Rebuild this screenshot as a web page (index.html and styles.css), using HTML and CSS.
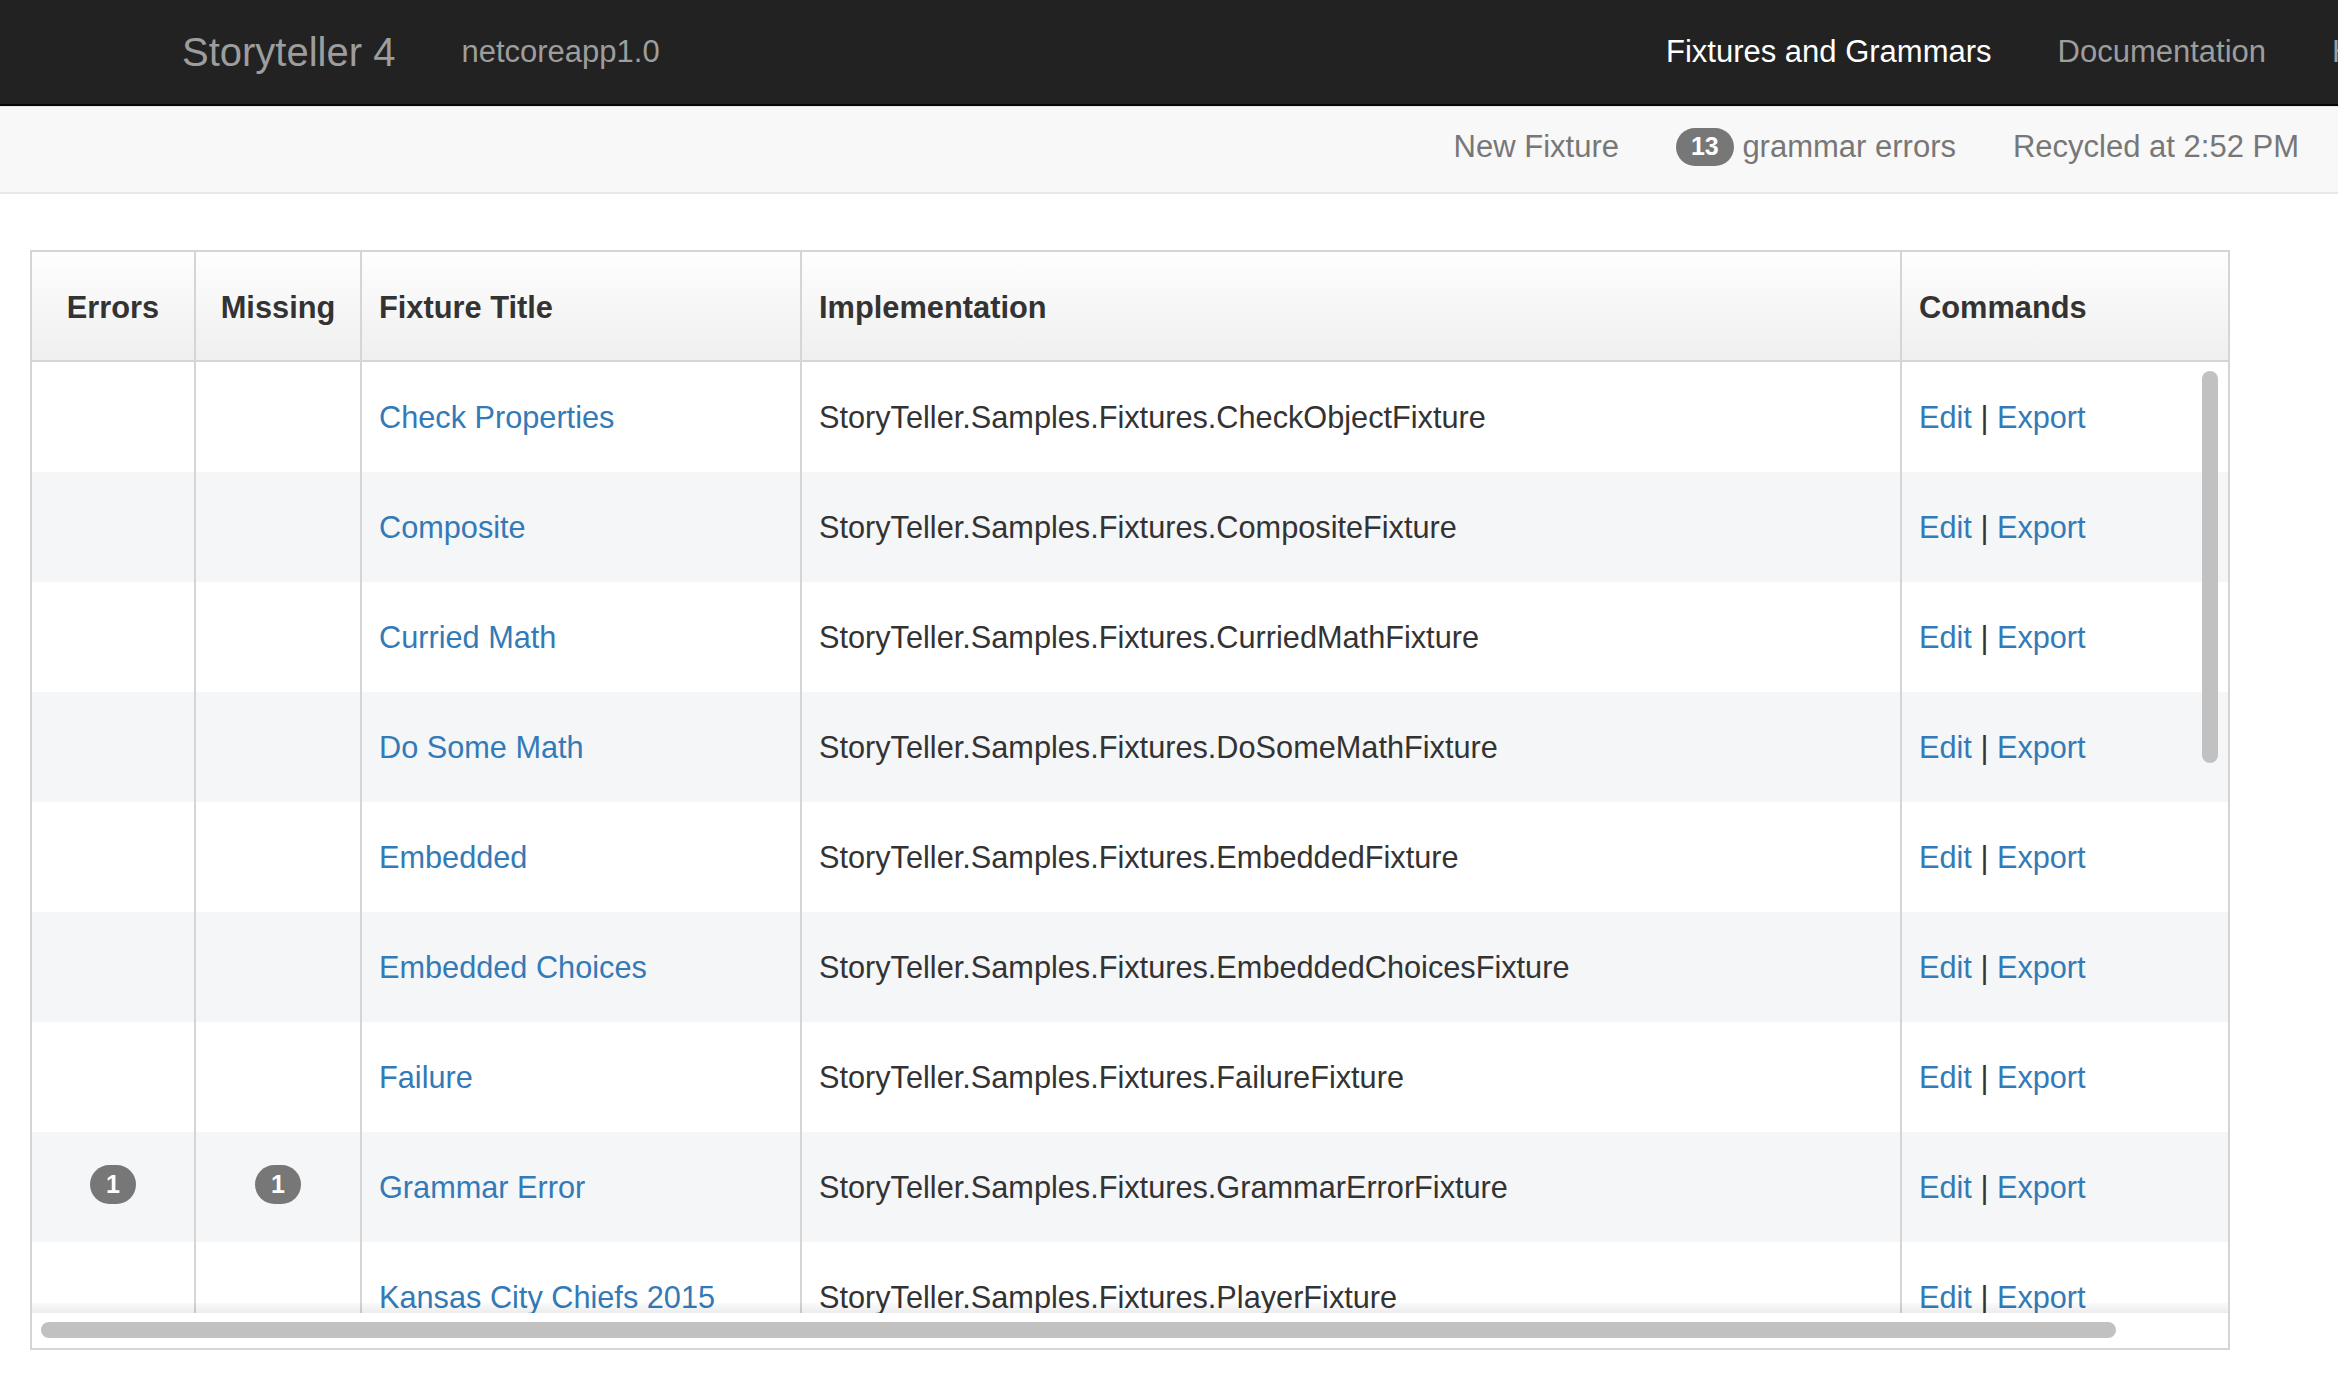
FILE: index.html
```html
<!DOCTYPE html>
<html lang="en">
<head>
<meta charset="utf-8">
<title>Storyteller 4 - Fixtures and Grammars</title>
<link rel="stylesheet" href="styles.css">
</head>
<body>
<header class="topbar">
  <div class="topbar-inner">
    <a class="brand" href="#">Storyteller 4</a>
    <span class="framework">netcoreapp1.0</span>
    <ul class="nav">
      <li class="active"><a href="#">Fixtures and Grammars</a></li>
      <li><a href="#">Documentation</a></li>
      <li><a href="#">Help</a></li>
    </ul>
  </div>
</header>
<div class="subbar">
  <a class="sub-item" href="#">New Fixture</a>
  <span class="sub-item"><span class="badge">13</span> grammar errors</span>
  <span class="sub-item">Recycled at 2:52 PM</span>
</div>
<main class="content">
  <div class="grid">
    <div class="row head">
      <div class="cell center">Errors</div>
      <div class="cell center">Missing</div>
      <div class="cell">Fixture Title</div>
      <div class="cell">Implementation</div>
      <div class="cell">Commands</div>
    </div>
    <div class="grid-body">
      <div class="row">
        <div class="cell center"></div><div class="cell center"></div>
        <div class="cell"><a href="#">Check Properties</a></div>
        <div class="cell">StoryTeller.Samples.Fixtures.CheckObjectFixture</div>
        <div class="cell"><a href="#">Edit</a>&nbsp;|&nbsp;<a href="#">Export</a></div>
      </div>
      <div class="row">
        <div class="cell center"></div><div class="cell center"></div>
        <div class="cell"><a href="#">Composite</a></div>
        <div class="cell">StoryTeller.Samples.Fixtures.CompositeFixture</div>
        <div class="cell"><a href="#">Edit</a>&nbsp;|&nbsp;<a href="#">Export</a></div>
      </div>
      <div class="row">
        <div class="cell center"></div><div class="cell center"></div>
        <div class="cell"><a href="#">Curried Math</a></div>
        <div class="cell">StoryTeller.Samples.Fixtures.CurriedMathFixture</div>
        <div class="cell"><a href="#">Edit</a>&nbsp;|&nbsp;<a href="#">Export</a></div>
      </div>
      <div class="row">
        <div class="cell center"></div><div class="cell center"></div>
        <div class="cell"><a href="#">Do Some Math</a></div>
        <div class="cell">StoryTeller.Samples.Fixtures.DoSomeMathFixture</div>
        <div class="cell"><a href="#">Edit</a>&nbsp;|&nbsp;<a href="#">Export</a></div>
      </div>
      <div class="row">
        <div class="cell center"></div><div class="cell center"></div>
        <div class="cell"><a href="#">Embedded</a></div>
        <div class="cell">StoryTeller.Samples.Fixtures.EmbeddedFixture</div>
        <div class="cell"><a href="#">Edit</a>&nbsp;|&nbsp;<a href="#">Export</a></div>
      </div>
      <div class="row">
        <div class="cell center"></div><div class="cell center"></div>
        <div class="cell"><a href="#">Embedded Choices</a></div>
        <div class="cell">StoryTeller.Samples.Fixtures.EmbeddedChoicesFixture</div>
        <div class="cell"><a href="#">Edit</a>&nbsp;|&nbsp;<a href="#">Export</a></div>
      </div>
      <div class="row">
        <div class="cell center"></div><div class="cell center"></div>
        <div class="cell"><a href="#">Failure</a></div>
        <div class="cell">StoryTeller.Samples.Fixtures.FailureFixture</div>
        <div class="cell"><a href="#">Edit</a>&nbsp;|&nbsp;<a href="#">Export</a></div>
      </div>
      <div class="row">
        <div class="cell center"><span class="badge count">1</span></div>
        <div class="cell center"><span class="badge count">1</span></div>
        <div class="cell"><a href="#">Grammar Error</a></div>
        <div class="cell">StoryTeller.Samples.Fixtures.GrammarErrorFixture</div>
        <div class="cell"><a href="#">Edit</a>&nbsp;|&nbsp;<a href="#">Export</a></div>
      </div>
      <div class="row">
        <div class="cell center"></div><div class="cell center"></div>
        <div class="cell"><a href="#">Kansas City Chiefs 2015</a></div>
        <div class="cell">StoryTeller.Samples.Fixtures.PlayerFixture</div>
        <div class="cell"><a href="#">Edit</a>&nbsp;|&nbsp;<a href="#">Export</a></div>
      </div>
      <div class="vthumb"></div>
    </div>
    <div class="hscroll"><div class="hthumb"></div></div>
  </div>
</main>
</body>
</html>
```

FILE: styles.css
```css
html, body {
  margin: 0;
  padding: 0;
  background: #fff;
  overflow: hidden;
}
body {
  font-family: "Liberation Sans", Arial, Helvetica, sans-serif;
  font-size: 31px;
  color: #333;
}
a {
  color: #337ab7;
  text-decoration: none;
}

/* top navbar */
.topbar {
  background: #222;
  border-bottom: 2px solid #080808;
  height: 104px;
  overflow: hidden;
}
.topbar-inner {
  display: flex;
  align-items: center;
  height: 104px;
  padding-left: 182px;
}
.brand {
  font-size: 40px;
  color: #9d9d9d;
  margin-right: 66px;
}
.framework {
  color: #9d9d9d;
  white-space: nowrap;
}
.nav {
  display: flex;
  list-style: none;
  margin: 0 0 0 auto;
  padding: 0;
  width: 705px;
  overflow: hidden;
  white-space: nowrap;
}
.nav li {
  flex-shrink: 0;
  padding: 0 33px;
}
.nav a {
  color: #9d9d9d;
}
.nav li.active a {
  color: #fff;
}

/* secondary bar */
.subbar {
  display: flex;
  justify-content: flex-end;
  align-items: center;
  gap: 57px;
  height: 88px;
  box-sizing: border-box;
  padding: 0 39px 6px 0;
  background: #f8f8f8;
  border-top: 1px solid #e7e7e7;
  border-bottom: 2px solid #e7e7e7;
  color: #777;
}
.sub-item {
  color: #777;
  white-space: nowrap;
}

.badge {
  display: inline-block;
  background: #777;
  color: #fff;
  font-weight: bold;
  font-size: 25px;
  line-height: 1;
  padding: 6px 15px 7px;
  border-radius: 20px;
  vertical-align: 2px;
}
.badge.count {
  padding: 7px 16px 7px;
  margin-bottom: 6px;
  vertical-align: baseline;
}

/* grid */
.content {
  padding: 56px 30px;
}
.grid {
  width: 2200px;
  box-sizing: border-box;
  border: 2px solid #d5d5d5;
}
.row {
  display: grid;
  grid-template-columns: 164px 166px 440px 1100px 1fr;
  height: 110px;
  font-size: 30.7px;
}
.row.head {
  height: 110px;
  border-bottom: 2px solid #d5d5d5;
  box-sizing: border-box;
  background: linear-gradient(#fefefe, #efefef);
  font-weight: bold;
  font-size: 30.8px;
}
.cell {
  display: flex;
  align-items: center;
  padding: 1px 17px 0;
  border-right: 2px solid #d5d5d5;
  white-space: nowrap;
  overflow: hidden;
}
.row.head .cell {
  padding-top: 3px;
}
.cell:last-child {
  border-right: none;
}
.cell.center {
  justify-content: center;
  padding-left: 0;
  padding-right: 0;
}
.grid-body {
  position: relative;
  height: 951px;
  overflow: hidden;
}
.grid-body .row:nth-child(even) {
  background: #f5f6f8;
}
.vthumb {
  position: absolute;
  top: 9px;
  right: 10px;
  width: 16px;
  height: 392px;
  border-radius: 8px;
  background: #c1c1c1;
}
.hscroll {
  position: relative;
  height: 35px;
  background: #fff;
  padding: 9px 0 0 9px;
  box-sizing: border-box;
}
.hscroll::before {
  content: "";
  position: absolute;
  left: 0;
  right: 0;
  top: -10px;
  height: 10px;
  background: linear-gradient(rgba(0,0,0,0.02), rgba(0,0,0,0.075));
}
.hthumb {
  width: 2075px;
  height: 16px;
  border-radius: 8px;
  background: #c1c1c1;
}
```
